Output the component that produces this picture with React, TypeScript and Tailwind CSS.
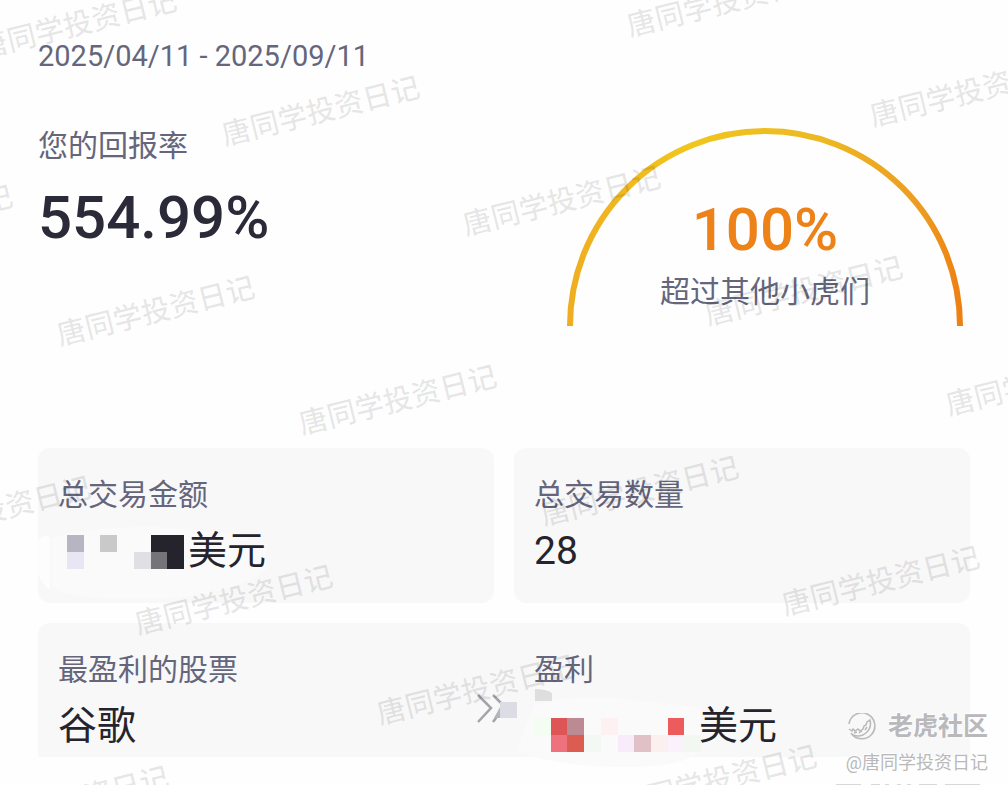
import React from "react";

const WATERMARK = "唐同学投资日记";

const watermarks = [
    { x: 78, y: 25 },
    { x: 726, y: 3 },
    { x: 321, y: 112 },
    { x: 969, y: 93 },
    { x: -86, y: 221 },
    { x: 562, y: 202 },
    { x: 156, y: 312 },
    { x: 804, y: 292 },
    { x: 398, y: 401 },
    { x: 1045, y: 382 },
    { x: -8, y: 512 },
    { x: 640, y: 492 },
    { x: 234, y: 601 },
    { x: 881, y: 582 },
    { x: 476, y: 691 },
    { x: 70, y: 802 },
    { x: 718, y: 781 },
];

type Cell = [col: number, row: number, color: string];

const amountCells: Cell[] = [
    [0, 0, "#b6b5c1"],
    [2, 0, "#c9c9ca"],
    [5, 0, "#25242d"],
    [6, 0, "#25242d"],
    [0, 1, "#e8e6f2"],
    [4, 1, "#e0e0e4"],
    [5, 1, "#757479"],
    [6, 1, "#25242d"],
];

const profitCells: Cell[] = [
    [0, 0, "#f4fdf2"],
    [1, 0, "#dd5555"],
    [2, 0, "#bb8a93"],
    [4, 0, "#fdf1f3"],
    [8, 0, "#ec5c5c"],
    [1, 1, "#ee727e"],
    [2, 1, "#dd5c51"],
    [3, 1, "#f4f8f4"],
    [5, 1, "#f8ebfa"],
    [6, 1, "#dfc1c6"],
    [7, 1, "#fbeff0"],
    [8, 1, "#fbf1fd"],
    [9, 1, "#f3f7f2"],
];

function Mosaic({ cells, cols, className }: { cells: Cell[]; cols: number; className: string }) {
    return (
        <svg
            className={className}
            viewBox={`0 0 ${cols} 2`}
            preserveAspectRatio="none"
            shapeRendering="crispEdges"
            aria-hidden="true"
        >
            {cells.map(([col, row, color]) => (
                <rect key={`${col}-${row}`} x={col} y={row} width="1" height="1" fill={color} />
            ))}
        </svg>
    );
}

function Gauge() {
    return (
        <div className="relative w-[396px]">
            <svg className="block w-full" viewBox="0 0 396 200" fill="none" aria-hidden="true">
                <defs>
                    <linearGradient id="gauge" x1="0" y1="0" x2="1" y2="0">
                        <stop offset="0" stopColor="#efae20" />
                        <stop offset="0.3" stopColor="#f0c61e" />
                        <stop offset="0.65" stopColor="#edb822" />
                        <stop offset="0.9" stopColor="#ec9c20" />
                        <stop offset="1" stopColor="#ee8013" />
                    </linearGradient>
                </defs>
                <path d="M3 198 A195 195 0 0 1 393 198" stroke="url(#gauge)" strokeWidth="6" />
            </svg>
            <div className="absolute inset-x-0 bottom-4 text-center">
                <p className="text-6xl leading-[60px] font-medium text-[#ec8218]">100%</p>
                <p className="mt-3 text-3xl leading-10">超过其他小虎们</p>
            </div>
        </div>
    );
}

export default function App() {
    return (
        <main className="relative min-h-screen overflow-hidden bg-[#fefefe] px-[38px] pt-9 font-[Roboto,'Noto_Sans_CJK_SC',sans-serif] text-[#65667c]">
            <p className="text-[29px] leading-10">2025/04/11 - 2025/09/11</p>

            {/* Return rate and ranking */}
            <section className="mt-[50px] flex h-[322px] justify-between">
                <div>
                    <h2 className="text-3xl leading-10">您的回报率</h2>
                    <p className="mt-[22px] text-6xl leading-[60px] font-medium text-[#2b2a38]">554.99%</p>
                </div>
                <div className="flex w-[410px] items-start justify-center pt-[2px]">
                    <Gauge />
                </div>
            </section>

            {/* Totals */}
            <section className="grid grid-cols-2 gap-5">
                <div className="relative h-[155px] overflow-hidden rounded-xl bg-[#f8f8f9] px-5 pt-[27px]">
                    <svg className="absolute top-[76px] left-0 h-[79px] w-[230px]" viewBox="0 0 230 79" aria-hidden="true">
                        <path d="M14 14Q50 2 115 3T228 20V46Q190 74 110 75T14 62Z" fill="#fafafb" />
                        <path d="M0 16Q8 8 12 14V66Q4 60 0 50Z" fill="#fdfdfd" />
                    </svg>
                    <h3 className="relative text-3xl leading-10">总交易金额</h3>
                    <p className="relative mt-3 flex items-center text-[39px] leading-[48px] text-[#25242d]">
                        <Mosaic cells={amountCells} cols={7} className="mt-[2px] mr-1 ml-[9px] h-[34px] w-[117px]" />
                        美元
                    </p>
                </div>
                <div className="h-[155px] rounded-xl bg-[#f8f8f9] px-5 pt-[27px]">
                    <h3 className="text-3xl leading-10">总交易数量</h3>
                    <p className="mt-3 text-[39px] leading-[48px] text-[#25242d]">28</p>
                </div>
            </section>

            {/* Most profitable stock */}
            <section className="relative mt-5 grid h-[134px] grid-cols-2 gap-5 rounded-t-xl bg-[#f8f8f9] pt-[27px]">
                <svg className="absolute top-[60px] left-[438px] h-[90px] w-[240px]" viewBox="0 0 240 90" aria-hidden="true">
                    <path d="M58 22Q100 10 150 16T225 24V62Q220 84 150 84T40 68Z" fill="#fafafa" />
                    <path
                        d="M2 12L15 25L2 39M17 12L25 20M25 28L17 39"
                        fill="none"
                        stroke="#a3a3a9"
                        strokeWidth="2.5"
                    />
                    <path d="M24 19H41V35H24Z" fill="#dcdde4" />
                    <path d="M24 24V35H18Z" fill="#b5b5b9" />
                    <path d="M59 6Q70 6 76 10V18H59Z" fill="#dedede" />
                </svg>
                <div className="px-5">
                    <h3 className="text-3xl leading-10">最盈利的股票</h3>
                    <p className="mt-3 text-[39px] leading-[48px] text-[#25242d]">谷歌</p>
                </div>
                <div className="relative px-5">
                    <h3 className="text-3xl leading-10">盈利</h3>
                    <div className="mt-3 flex h-12 items-start text-[39px] leading-[48px] text-[#25242d]">
                        <Mosaic cells={profitCells} cols={10} className="mt-4 -mr-[2px] h-[34px] w-[167px]" />
                        <p>美元</p>
                    </div>
                </div>
            </section>

            {/* Diagonal watermark layer */}
            <div className="pointer-events-none absolute inset-0" aria-hidden="true">
                {watermarks.map(({ x, y }) => (
                    <span
                        key={`${x}-${y}`}
                        className="absolute -translate-x-1/2 -translate-y-1/2 -rotate-14 text-[29px] font-medium whitespace-nowrap text-black/9"
                        style={{ left: x, top: y }}
                    >
                        {WATERMARK}
                    </span>
                ))}
            </div>

            {/* Community signature */}
            <footer className="absolute right-5 bottom-1 text-right text-[#b9b9bb] text-shadow-[-1px_-1px_0_#ffffff]">
                <div className="flex items-center justify-end gap-3">
                    <svg className="size-7" viewBox="0 0 28 28" fill="none" stroke="currentColor" strokeWidth="1.5" aria-hidden="true">
                        <path d="M1 11A13 13 0 1 1 3 20" />
                        <path d="M1 16L4 18L5 16L7 18L10 16L12 18L15 16L16 13L18 12L19 9L22 7Q24 14 19 19Q13 25 5 22" />
                        <path d="M6 20L9 19M11 20L14 18M17 17L19 14" />
                    </svg>
                    <span className="text-[25px] leading-9 font-bold">老虎社区</span>
                </div>
                <p className="text-lg leading-9">@唐同学投资日记</p>
            </footer>
            <svg className="absolute right-6 bottom-0 h-px w-[148px]" viewBox="0 0 148 1" aria-hidden="true">
                <path d="M0 0H25M35 0H44M49 0H53M61 0H65M71 0H75M83 0H101M109 0H144" stroke="#d8d8d8" strokeWidth="2" />
            </svg>
        </main>
    );
}
